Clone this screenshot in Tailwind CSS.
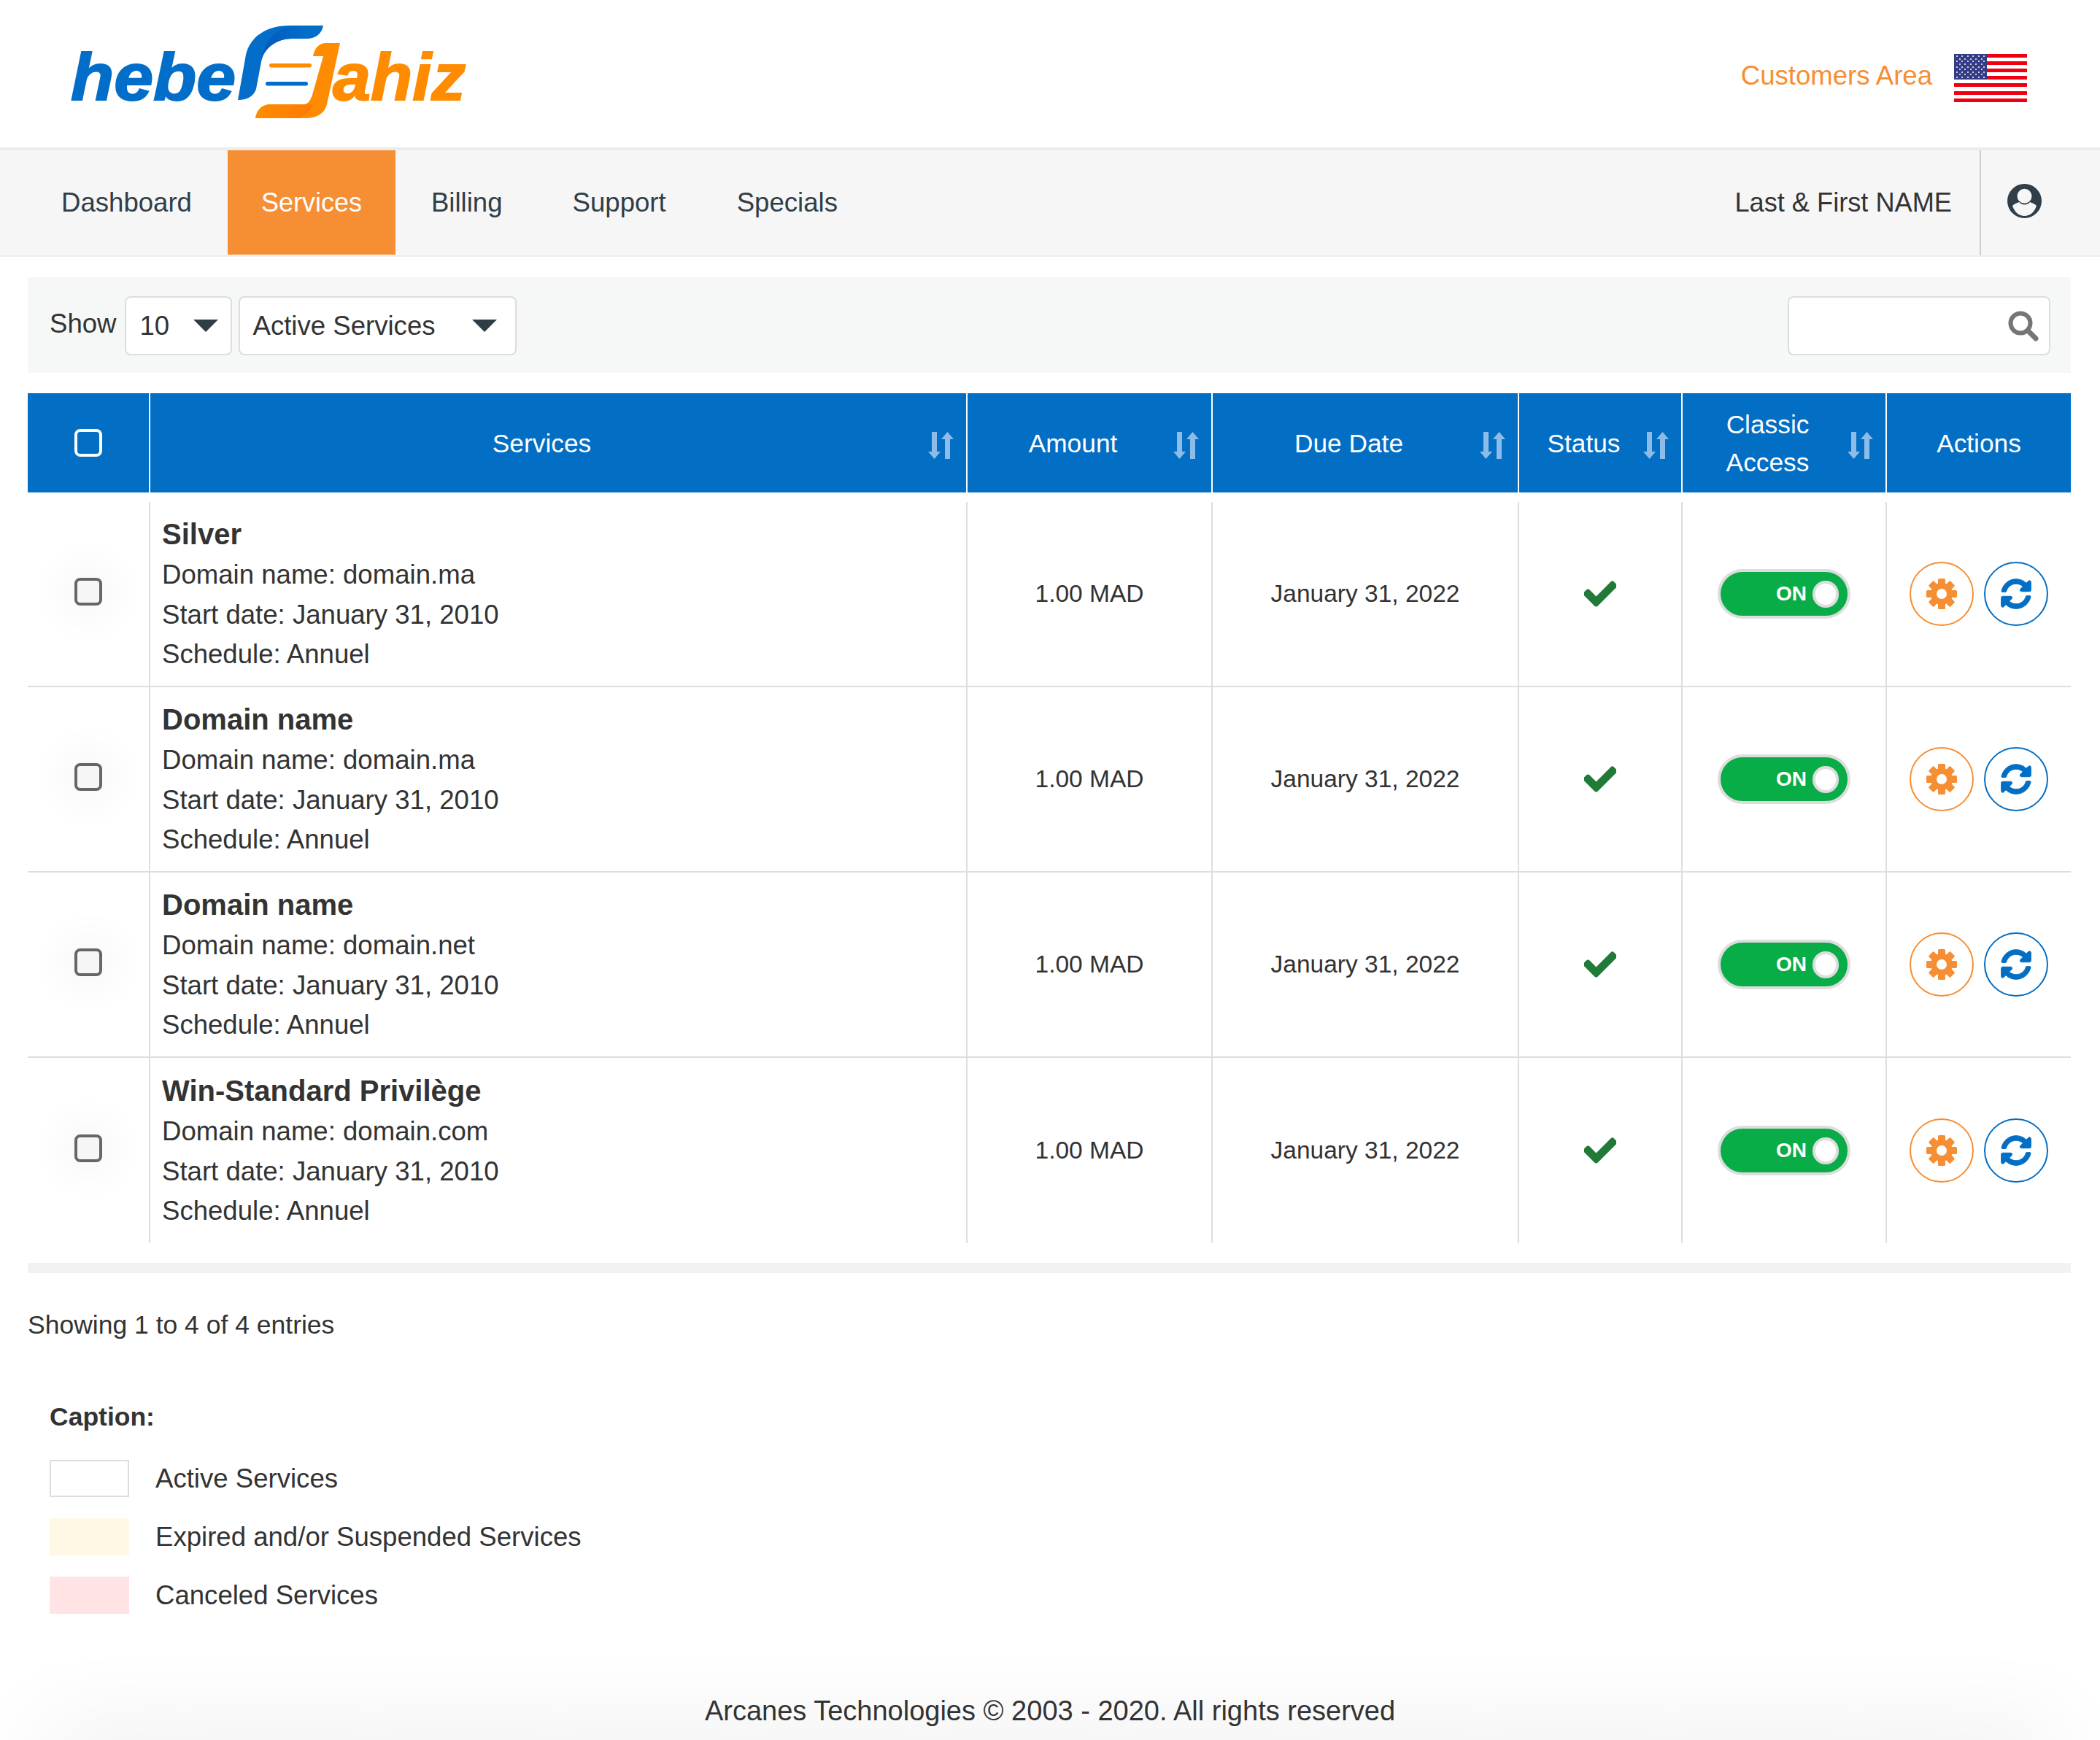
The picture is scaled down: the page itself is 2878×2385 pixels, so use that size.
<!DOCTYPE html>
<html lang="en">
<head>
<meta charset="UTF-8" />
<title>Services</title>
<script src="https://cdn.jsdelivr.net/npm/@tailwindcss/browser@4"></script>
</head>
<body class="relative h-[2385px] bg-white font-['Liberation_Sans',Arial,sans-serif] text-[36.6px] text-[#333] overflow-hidden">
<svg class="hidden">
  <symbol id="sort" viewBox="0 0 35 37">
    <path d="M5 0h7v27h5L8.500 37 0 27h5z" fill="#8ebce8"/>
    <path d="M23 37h7V10h5L26.500 0 18 10h5z" fill="#8ebce8"/>
  </symbol>
  <symbol id="check" viewBox="0 0 512 512">
    <path fill="#217a38" stroke="#217a38" stroke-width="24" d="M173.898 439.404l-166.4-166.4c-9.997-9.997-9.997-26.206 0-36.204l36.203-36.204c9.997-9.998 26.207-9.998 36.204 0L192 312.690 432.095 72.596c9.997-9.997 26.207-9.997 36.204 0l36.203 36.204c9.997 9.997 9.997 26.206 0 36.204l-294.400 294.401c-9.998 9.997-26.207 9.997-36.204-.001z"/>
  </symbol>
  <symbol id="gear" viewBox="-21 -21 42 42">
    <g fill="#f68e33">
      <circle r="15"/>
      <rect x="-5" y="-21" width="10" height="10" rx="1.500"/>
      <rect x="-5" y="-21" width="10" height="10" rx="1.500" transform="rotate(45)"/>
      <rect x="-5" y="-21" width="10" height="10" rx="1.500" transform="rotate(90)"/>
      <rect x="-5" y="-21" width="10" height="10" rx="1.500" transform="rotate(135)"/>
      <rect x="-5" y="-21" width="10" height="10" rx="1.500" transform="rotate(180)"/>
      <rect x="-5" y="-21" width="10" height="10" rx="1.500" transform="rotate(225)"/>
      <rect x="-5" y="-21" width="10" height="10" rx="1.500" transform="rotate(270)"/>
      <rect x="-5" y="-21" width="10" height="10" rx="1.500" transform="rotate(315)"/>
    </g>
    <circle r="7" fill="#fff"/>
  </symbol>
  <symbol id="sync" viewBox="0 0 512 512">
    <path fill="#026ec4" stroke="#026ec4" stroke-width="12" d="M370.720 133.280C339.458 104.008 298.888 87.962 255.848 88c-77.458.068-144.328 53.178-162.791 126.850-1.344 5.363-6.122 9.150-11.651 9.150H24.103c-7.498 0-13.194-6.807-11.807-14.176C33.933 94.924 134.813 8 256 8c66.448 0 126.791 26.136 171.315 68.685L463.030 40.970C478.149 25.851 504 36.559 504 57.941V192c0 13.255-10.745 24-24 24H345.941c-21.382 0-32.090-25.851-16.971-40.971l41.750-41.749zM32 296h134.059c21.382 0 32.090 25.851 16.971 40.971l-41.750 41.750c31.262 29.273 71.835 45.319 114.876 45.280 77.418-.070 144.315-53.144 162.787-126.849 1.344-5.363 6.122-9.150 11.651-9.150h57.304c7.498 0 13.194 6.807 11.807 14.176C478.067 417.076 377.187 504 256 504c-66.448 0-126.791-26.136-171.315-68.685L48.970 471.030C33.851 486.149 8 475.441 8 454.059V320c0-13.255 10.745-24 24-24z"/>
  </symbol>
</svg>

<!-- Top header -->
<header class="h-[202px] flex items-center justify-between">
  <svg width="660" height="202" viewBox="0 0 660 202" class="shrink-0">
    <defs>
      <linearGradient id="bl" x1="0" x2="1" y1="0" y2="0"><stop offset="0" stop-color="#0558bf"/><stop offset="1" stop-color="#026ec9"/></linearGradient>
      <linearGradient id="or" x1="0" x2="1" y1="0" y2="0"><stop offset="0" stop-color="#ff8c00"/><stop offset="1" stop-color="#ff7a00"/></linearGradient>
    </defs>
    <text x="97" y="136.500" font-family="Liberation Sans" font-weight="700" font-style="italic" font-size="90" fill="#026ec9" textLength="226" lengthAdjust="spacingAndGlyphs" stroke="#026ec9" stroke-width="2">hebe</text>
    <path fill="#026ec9" d="M326 137 L337 75 C343 50 365 35 397 35 L443 35 C441 46 433 53 420 53 L400 53 C380 53 362 65 358 85 L351 122 C348 131 340 137 326 137Z"/>
    <path fill="url(#bl)" d="M358 80 C362 60 375 42 395 36 L420 36 L420 53 L400 53 C380 53 364 65 358 80Z"/>
    <rect x="369" y="87" width="58" height="5.500" rx="2.700" fill="#ff8c00"/>
    <rect x="364" y="112" width="58" height="5.500" rx="2.700" fill="#026ec9"/>
    <path fill="#ff8c00" d="M429 77 C431 66 437 59 447 59 L466 59 L448 143 C445 155 435 162 418 162 L350 162 C352 151 358 143 372 143 L416 143 C423 143 426 136 428 130 L443 77Z"/>
    <path fill="url(#or)" d="M350 162 C352 151 358 143 372 143 L428 143 C426 150 420 158 410 162Z"/>
    <text x="456" y="136.500" font-family="Liberation Sans" font-weight="700" font-style="italic" font-size="90" fill="#ff8c00" textLength="182" lengthAdjust="spacingAndGlyphs" stroke="#ff8c00" stroke-width="2">ahiz</text>
  </svg>
  <div class="flex items-center mr-[100px] mt-[12px]">
    <a class="text-[#f68e33] leading-[44px] mr-[30px] mb-[6px]">Customers Area</a>
    <!-- flag -->
    <svg width="100" height="66" viewBox="0 0 100 66" class="block">
      <rect width="100" height="66" fill="#fff"/>
      <g fill="#ee0010">
        <rect y="0" width="100" height="5"/><rect y="10" width="100" height="5"/><rect y="20" width="100" height="5"/><rect y="30" width="100" height="5"/><rect y="40" width="100" height="5"/><rect y="51" width="100" height="5"/><rect y="61" width="100" height="5"/>
      </g>
      <rect width="45" height="35" fill="#353c86"/>
      <g fill="#fff">
        <circle cx="4" cy="3" r="1"/><circle cx="11" cy="3" r="1"/><circle cx="19" cy="3" r="1"/><circle cx="26" cy="3" r="1"/><circle cx="34" cy="3" r="1"/><circle cx="41" cy="3" r="1"/>
        <circle cx="8" cy="7" r="1"/><circle cx="15" cy="7" r="1"/><circle cx="23" cy="7" r="1"/><circle cx="30" cy="7" r="1"/><circle cx="38" cy="7" r="1"/>
        <circle cx="4" cy="10" r="1"/><circle cx="11" cy="10" r="1"/><circle cx="19" cy="10" r="1"/><circle cx="26" cy="10" r="1"/><circle cx="34" cy="10" r="1"/><circle cx="41" cy="10" r="1"/>
        <circle cx="8" cy="14" r="1"/><circle cx="15" cy="14" r="1"/><circle cx="23" cy="14" r="1"/><circle cx="30" cy="14" r="1"/><circle cx="38" cy="14" r="1"/>
        <circle cx="4" cy="18" r="1"/><circle cx="11" cy="18" r="1"/><circle cx="19" cy="18" r="1"/><circle cx="26" cy="18" r="1"/><circle cx="34" cy="18" r="1"/><circle cx="41" cy="18" r="1"/>
        <circle cx="8" cy="21" r="1"/><circle cx="15" cy="21" r="1"/><circle cx="23" cy="21" r="1"/><circle cx="30" cy="21" r="1"/><circle cx="38" cy="21" r="1"/>
        <circle cx="4" cy="25" r="1"/><circle cx="11" cy="25" r="1"/><circle cx="19" cy="25" r="1"/><circle cx="26" cy="25" r="1"/><circle cx="34" cy="25" r="1"/><circle cx="41" cy="25" r="1"/>
        <circle cx="8" cy="28" r="1"/><circle cx="15" cy="28" r="1"/><circle cx="23" cy="28" r="1"/><circle cx="30" cy="28" r="1"/><circle cx="38" cy="28" r="1"/>
        <circle cx="4" cy="32" r="1"/><circle cx="11" cy="32" r="1"/><circle cx="19" cy="32" r="1"/><circle cx="26" cy="32" r="1"/><circle cx="34" cy="32" r="1"/><circle cx="41" cy="32" r="1"/>
      </g>
    </svg>
  </div>
</header>

<!-- Nav -->
<nav class="h-[150px] bg-[#f6f6f6] border-t-[4px] border-b-[2px] border-[#ececec] flex justify-between text-[#2f3e48]">
  <ul class="flex pl-[36px]">
    <li class="pl-[48px] pr-[49px] flex items-center">Dashboard</li>
    <li class="w-[230px] h-[143px] bg-[#f68e33] text-white text-[36px] flex items-center justify-center">Services</li>
    <li class="px-[49px] flex items-center">Billing</li>
    <li class="px-[47px] flex items-center">Support</li>
    <li class="pl-[50px] flex items-center">Specials</li>
  </ul>
  <div class="flex">
    <span class="flex items-center pr-[38px] text-[#333] text-[36.2px]">Last &amp; First NAME</span>
    <div class="w-[165px] border-l-[2px] border-[#ccc] flex items-center pl-[36px] pb-[6px]">
      <svg width="47" height="47" viewBox="0 0 47 47">
        <circle cx="23.500" cy="23.500" r="23.500" fill="#2f3e48"/>
        <circle cx="23.500" cy="16.800" r="10" fill="#f6f6f6"/>
        <path fill="#f6f6f6" d="M7 30 C10 27 14 26 16.500 25 C19 29.500 28 29.500 31 25 C33 26 37 27 40 30 C37 39 31 44 23.500 44 C16 44 10 39 7 30Z"/>
      </svg>
    </div>
  </div>
</nav>

<main class="px-[38px] pt-[28px]">
  <!-- Toolbar -->
  <div class="h-[131px] w-[2800px] bg-[#f6f7f7] flex items-center pl-[30px] pr-[28px]">
    <span class="mr-[11px] text-[#333] mb-[3px]">Show</span>
    <div class="w-[147px] h-[81px] mt-[2px] bg-white border-[2px] border-[#ddd] rounded-[8px] flex items-center justify-between pl-[19px] pr-[17px] mr-[9px]">
      <span class="pt-[2px]">10</span>
      <span class="w-0 h-0 border-l-[17px] border-r-[17px] border-t-[17px] border-l-transparent border-r-transparent border-t-[#2f3d45]"></span>
    </div>
    <div class="w-[381px] h-[81px] mt-[2px] bg-white border-[2px] border-[#ddd] rounded-[8px] flex items-center justify-between pl-[18px] pr-[25px]">
      <span class="pt-[2px]">Active Services</span>
      <span class="w-0 h-0 border-l-[17px] border-r-[17px] border-t-[17px] border-l-transparent border-r-transparent border-t-[#2f3d45]"></span>
    </div>
    <div class="ml-auto w-[360px] h-[81px] mt-[2px] bg-white border-[2px] border-[#ddd] rounded-[8px] flex items-center justify-end pr-[14px]">
      <svg width="42" height="42" viewBox="0 0 42 42" fill="none" stroke="#757575" stroke-linecap="round">
        <circle cx="17" cy="17" r="13.500" stroke-width="6"/>
        <path d="M27 27 L38 38" stroke-width="7"/>
      </svg>
    </div>
  </div>

  <!-- Table head -->
  <div class="mt-[28px] w-[2800px] h-[136px] bg-[#026ec4] text-white text-[35.3px] grid grid-cols-[166px_1120px_336px_420px_224px_280px_254px]">
    <div class="flex items-center justify-center"><span class="block w-[38px] h-[38px] border-[4px] border-white rounded-[8px]"></span></div>
    <div class="relative border-l-[2px] border-white flex items-center justify-center pr-[45px] pt-[2px]">Services<svg class="absolute right-[17px] top-[53px]" width="35" height="37"><use href="#sort"/></svg></div>
    <div class="relative border-l-[2px] border-white flex items-center justify-center pr-[45px] pt-[2px]">Amount<svg class="absolute right-[17px] top-[53px]" width="35" height="37"><use href="#sort"/></svg></div>
    <div class="relative border-l-[2px] border-white flex items-center justify-center pr-[45px] pt-[2px]">Due Date<svg class="absolute right-[17px] top-[53px]" width="35" height="37"><use href="#sort"/></svg></div>
    <div class="relative border-l-[2px] border-white flex items-center justify-center pr-[45px] pt-[2px]">Status<svg class="absolute right-[17px] top-[53px]" width="35" height="37"><use href="#sort"/></svg></div>
    <div class="relative border-l-[2px] border-white flex items-center justify-center pr-[45px] pt-[2px] text-center leading-[52px]">Classic<br>Access<svg class="absolute right-[17px] top-[53px]" width="35" height="37"><use href="#sort"/></svg></div>
    <div class="border-l-[2px] border-white flex items-center justify-center pt-[2px]">Actions</div>
  </div>

  <!-- Rows -->
  <div class="mt-[13px] w-[2800px] leading-[54.500px]">
    <div class="h-[254px] border-b-[2px] border-[#dedede] grid grid-cols-[166px_1120px_336px_420px_224px_280px_254px]">
      <div class="flex items-center justify-center"><span class="block w-[38px] h-[38px] mb-[6px] border-[4px] border-[#666] bg-[#f6f6f6] rounded-[8px] shadow-[0_0_50px_20px_rgba(0,0,0,0.03)]"></span></div>
      <div class="border-l-[2px] border-[#dedede] pl-[16px] pt-[1px] flex flex-col justify-center">
        <b class="text-[40px] leading-[57px]">Silver</b>
        <span>Domain name: domain.ma</span>
        <span>Start date: January 31, 2010</span>
        <span>Schedule: Annuel</span>
      </div>
      <div class="border-l-[2px] border-[#dedede] flex items-center justify-center text-[33.500px]">1.00 MAD</div>
      <div class="border-l-[2px] border-[#dedede] flex items-center justify-center text-[33.500px]">January 31, 2022</div>
      <div class="border-l-[2px] border-[#dedede] flex items-center justify-center"><svg width="44" height="44"><use href="#check"/></svg></div>
      <div class="border-l-[2px] border-[#dedede] flex items-center justify-center">
        <div class="w-[182px] h-[68px] rounded-full bg-[#09ad47] border-[4px] border-[#ddd] flex items-center justify-end pr-[12px]">
          <b class="text-white text-[28px] leading-none mr-[8px]">ON</b>
          <span class="block w-[36px] h-[37px] rounded-full bg-white border-[4px] border-[#ddd]"></span>
        </div>
      </div>
      <div class="border-l-[2px] border-[#dedede] flex items-center pl-[31px] gap-[14px]">
        <a class="w-[88px] h-[88px] rounded-full border-[2px] border-[#f68e33] flex items-center justify-center"><svg width="42" height="42"><use href="#gear"/></svg></a>
        <a class="w-[88px] h-[88px] rounded-full border-[2px] border-[#026ec4] flex items-center justify-center"><svg width="42" height="42"><use href="#sync"/></svg></a>
      </div>
    </div>
    <div class="h-[254px] border-b-[2px] border-[#dedede] grid grid-cols-[166px_1120px_336px_420px_224px_280px_254px]">
      <div class="flex items-center justify-center"><span class="block w-[38px] h-[38px] mb-[6px] border-[4px] border-[#666] bg-[#f6f6f6] rounded-[8px] shadow-[0_0_50px_20px_rgba(0,0,0,0.03)]"></span></div>
      <div class="border-l-[2px] border-[#dedede] pl-[16px] pt-[1px] flex flex-col justify-center">
        <b class="text-[40px] leading-[57px]">Domain name</b>
        <span>Domain name: domain.ma</span>
        <span>Start date: January 31, 2010</span>
        <span>Schedule: Annuel</span>
      </div>
      <div class="border-l-[2px] border-[#dedede] flex items-center justify-center text-[33.500px]">1.00 MAD</div>
      <div class="border-l-[2px] border-[#dedede] flex items-center justify-center text-[33.500px]">January 31, 2022</div>
      <div class="border-l-[2px] border-[#dedede] flex items-center justify-center"><svg width="44" height="44"><use href="#check"/></svg></div>
      <div class="border-l-[2px] border-[#dedede] flex items-center justify-center">
        <div class="w-[182px] h-[68px] rounded-full bg-[#09ad47] border-[4px] border-[#ddd] flex items-center justify-end pr-[12px]">
          <b class="text-white text-[28px] leading-none mr-[8px]">ON</b>
          <span class="block w-[36px] h-[37px] rounded-full bg-white border-[4px] border-[#ddd]"></span>
        </div>
      </div>
      <div class="border-l-[2px] border-[#dedede] flex items-center pl-[31px] gap-[14px]">
        <a class="w-[88px] h-[88px] rounded-full border-[2px] border-[#f68e33] flex items-center justify-center"><svg width="42" height="42"><use href="#gear"/></svg></a>
        <a class="w-[88px] h-[88px] rounded-full border-[2px] border-[#026ec4] flex items-center justify-center"><svg width="42" height="42"><use href="#sync"/></svg></a>
      </div>
    </div>
    <div class="h-[254px] border-b-[2px] border-[#dedede] grid grid-cols-[166px_1120px_336px_420px_224px_280px_254px]">
      <div class="flex items-center justify-center"><span class="block w-[38px] h-[38px] mb-[6px] border-[4px] border-[#666] bg-[#f6f6f6] rounded-[8px] shadow-[0_0_50px_20px_rgba(0,0,0,0.03)]"></span></div>
      <div class="border-l-[2px] border-[#dedede] pl-[16px] pt-[1px] flex flex-col justify-center">
        <b class="text-[40px] leading-[57px]">Domain name</b>
        <span>Domain name: domain.net</span>
        <span>Start date: January 31, 2010</span>
        <span>Schedule: Annuel</span>
      </div>
      <div class="border-l-[2px] border-[#dedede] flex items-center justify-center text-[33.500px]">1.00 MAD</div>
      <div class="border-l-[2px] border-[#dedede] flex items-center justify-center text-[33.500px]">January 31, 2022</div>
      <div class="border-l-[2px] border-[#dedede] flex items-center justify-center"><svg width="44" height="44"><use href="#check"/></svg></div>
      <div class="border-l-[2px] border-[#dedede] flex items-center justify-center">
        <div class="w-[182px] h-[68px] rounded-full bg-[#09ad47] border-[4px] border-[#ddd] flex items-center justify-end pr-[12px]">
          <b class="text-white text-[28px] leading-none mr-[8px]">ON</b>
          <span class="block w-[36px] h-[37px] rounded-full bg-white border-[4px] border-[#ddd]"></span>
        </div>
      </div>
      <div class="border-l-[2px] border-[#dedede] flex items-center pl-[31px] gap-[14px]">
        <a class="w-[88px] h-[88px] rounded-full border-[2px] border-[#f68e33] flex items-center justify-center"><svg width="42" height="42"><use href="#gear"/></svg></a>
        <a class="w-[88px] h-[88px] rounded-full border-[2px] border-[#026ec4] flex items-center justify-center"><svg width="42" height="42"><use href="#sync"/></svg></a>
      </div>
    </div>
    <div class="h-[254px] grid grid-cols-[166px_1120px_336px_420px_224px_280px_254px]">
      <div class="flex items-center justify-center"><span class="block w-[38px] h-[38px] mb-[6px] border-[4px] border-[#666] bg-[#f6f6f6] rounded-[8px] shadow-[0_0_50px_20px_rgba(0,0,0,0.03)]"></span></div>
      <div class="border-l-[2px] border-[#dedede] pl-[16px] pt-[1px] flex flex-col justify-center">
        <b class="text-[40px] leading-[57px]">Win-Standard Privilège</b>
        <span>Domain name: domain.com</span>
        <span>Start date: January 31, 2010</span>
        <span>Schedule: Annuel</span>
      </div>
      <div class="border-l-[2px] border-[#dedede] flex items-center justify-center text-[33.500px]">1.00 MAD</div>
      <div class="border-l-[2px] border-[#dedede] flex items-center justify-center text-[33.500px]">January 31, 2022</div>
      <div class="border-l-[2px] border-[#dedede] flex items-center justify-center"><svg width="44" height="44"><use href="#check"/></svg></div>
      <div class="border-l-[2px] border-[#dedede] flex items-center justify-center">
        <div class="w-[182px] h-[68px] rounded-full bg-[#09ad47] border-[4px] border-[#ddd] flex items-center justify-end pr-[12px]">
          <b class="text-white text-[28px] leading-none mr-[8px]">ON</b>
          <span class="block w-[36px] h-[37px] rounded-full bg-white border-[4px] border-[#ddd]"></span>
        </div>
      </div>
      <div class="border-l-[2px] border-[#dedede] flex items-center pl-[31px] gap-[14px]">
        <a class="w-[88px] h-[88px] rounded-full border-[2px] border-[#f68e33] flex items-center justify-center"><svg width="42" height="42"><use href="#gear"/></svg></a>
        <a class="w-[88px] h-[88px] rounded-full border-[2px] border-[#026ec4] flex items-center justify-center"><svg width="42" height="42"><use href="#sync"/></svg></a>
      </div>
    </div>
  </div>

  <div class="mt-[27px] w-[2800px] h-[14px] bg-[#f2f2f2]"></div>
  <p class="mt-[50px] leading-[42px] text-[35.500px]">Showing 1 to 4 of 4 entries</p>

  <!-- Caption -->
  <div class="pl-[30px] mt-[83px]">
    <b class="block leading-[44px] text-[35.500px]">Caption:</b>
    <ul class="mt-[37px] flex flex-col gap-[29px]">
      <li class="flex items-center h-[51px]"><span class="w-[109px] h-[51px] border-[2px] border-[#ddd] mr-[36px]"></span><span class="pt-[1px]">Active Services</span></li>
      <li class="flex items-center h-[51px]"><span class="w-[109px] h-[51px] bg-[#fff8e5] mr-[36px]"></span><span class="pt-[1px]">Expired and/or Suspended Services</span></li>
      <li class="flex items-center h-[51px]"><span class="w-[109px] h-[51px] bg-[#ffe3e5] mr-[36px]"></span><span class="pt-[1px]">Canceled Services</span></li>
    </ul>
  </div>
</main>

<footer class="mt-[107px] text-center">
  <span class="relative z-10 leading-[44px] text-[38px]">Arcanes Technologies © 2003 - 2020. All rights reserved</span>
</footer>
<!-- soft shadow rising from the page edge -->
<div class="absolute left-[60px] right-[60px] bottom-[-40px] h-[40px] shadow-[0_0_130px_rgba(0,0,0,0.14)]"></div>
</body>
</html>
